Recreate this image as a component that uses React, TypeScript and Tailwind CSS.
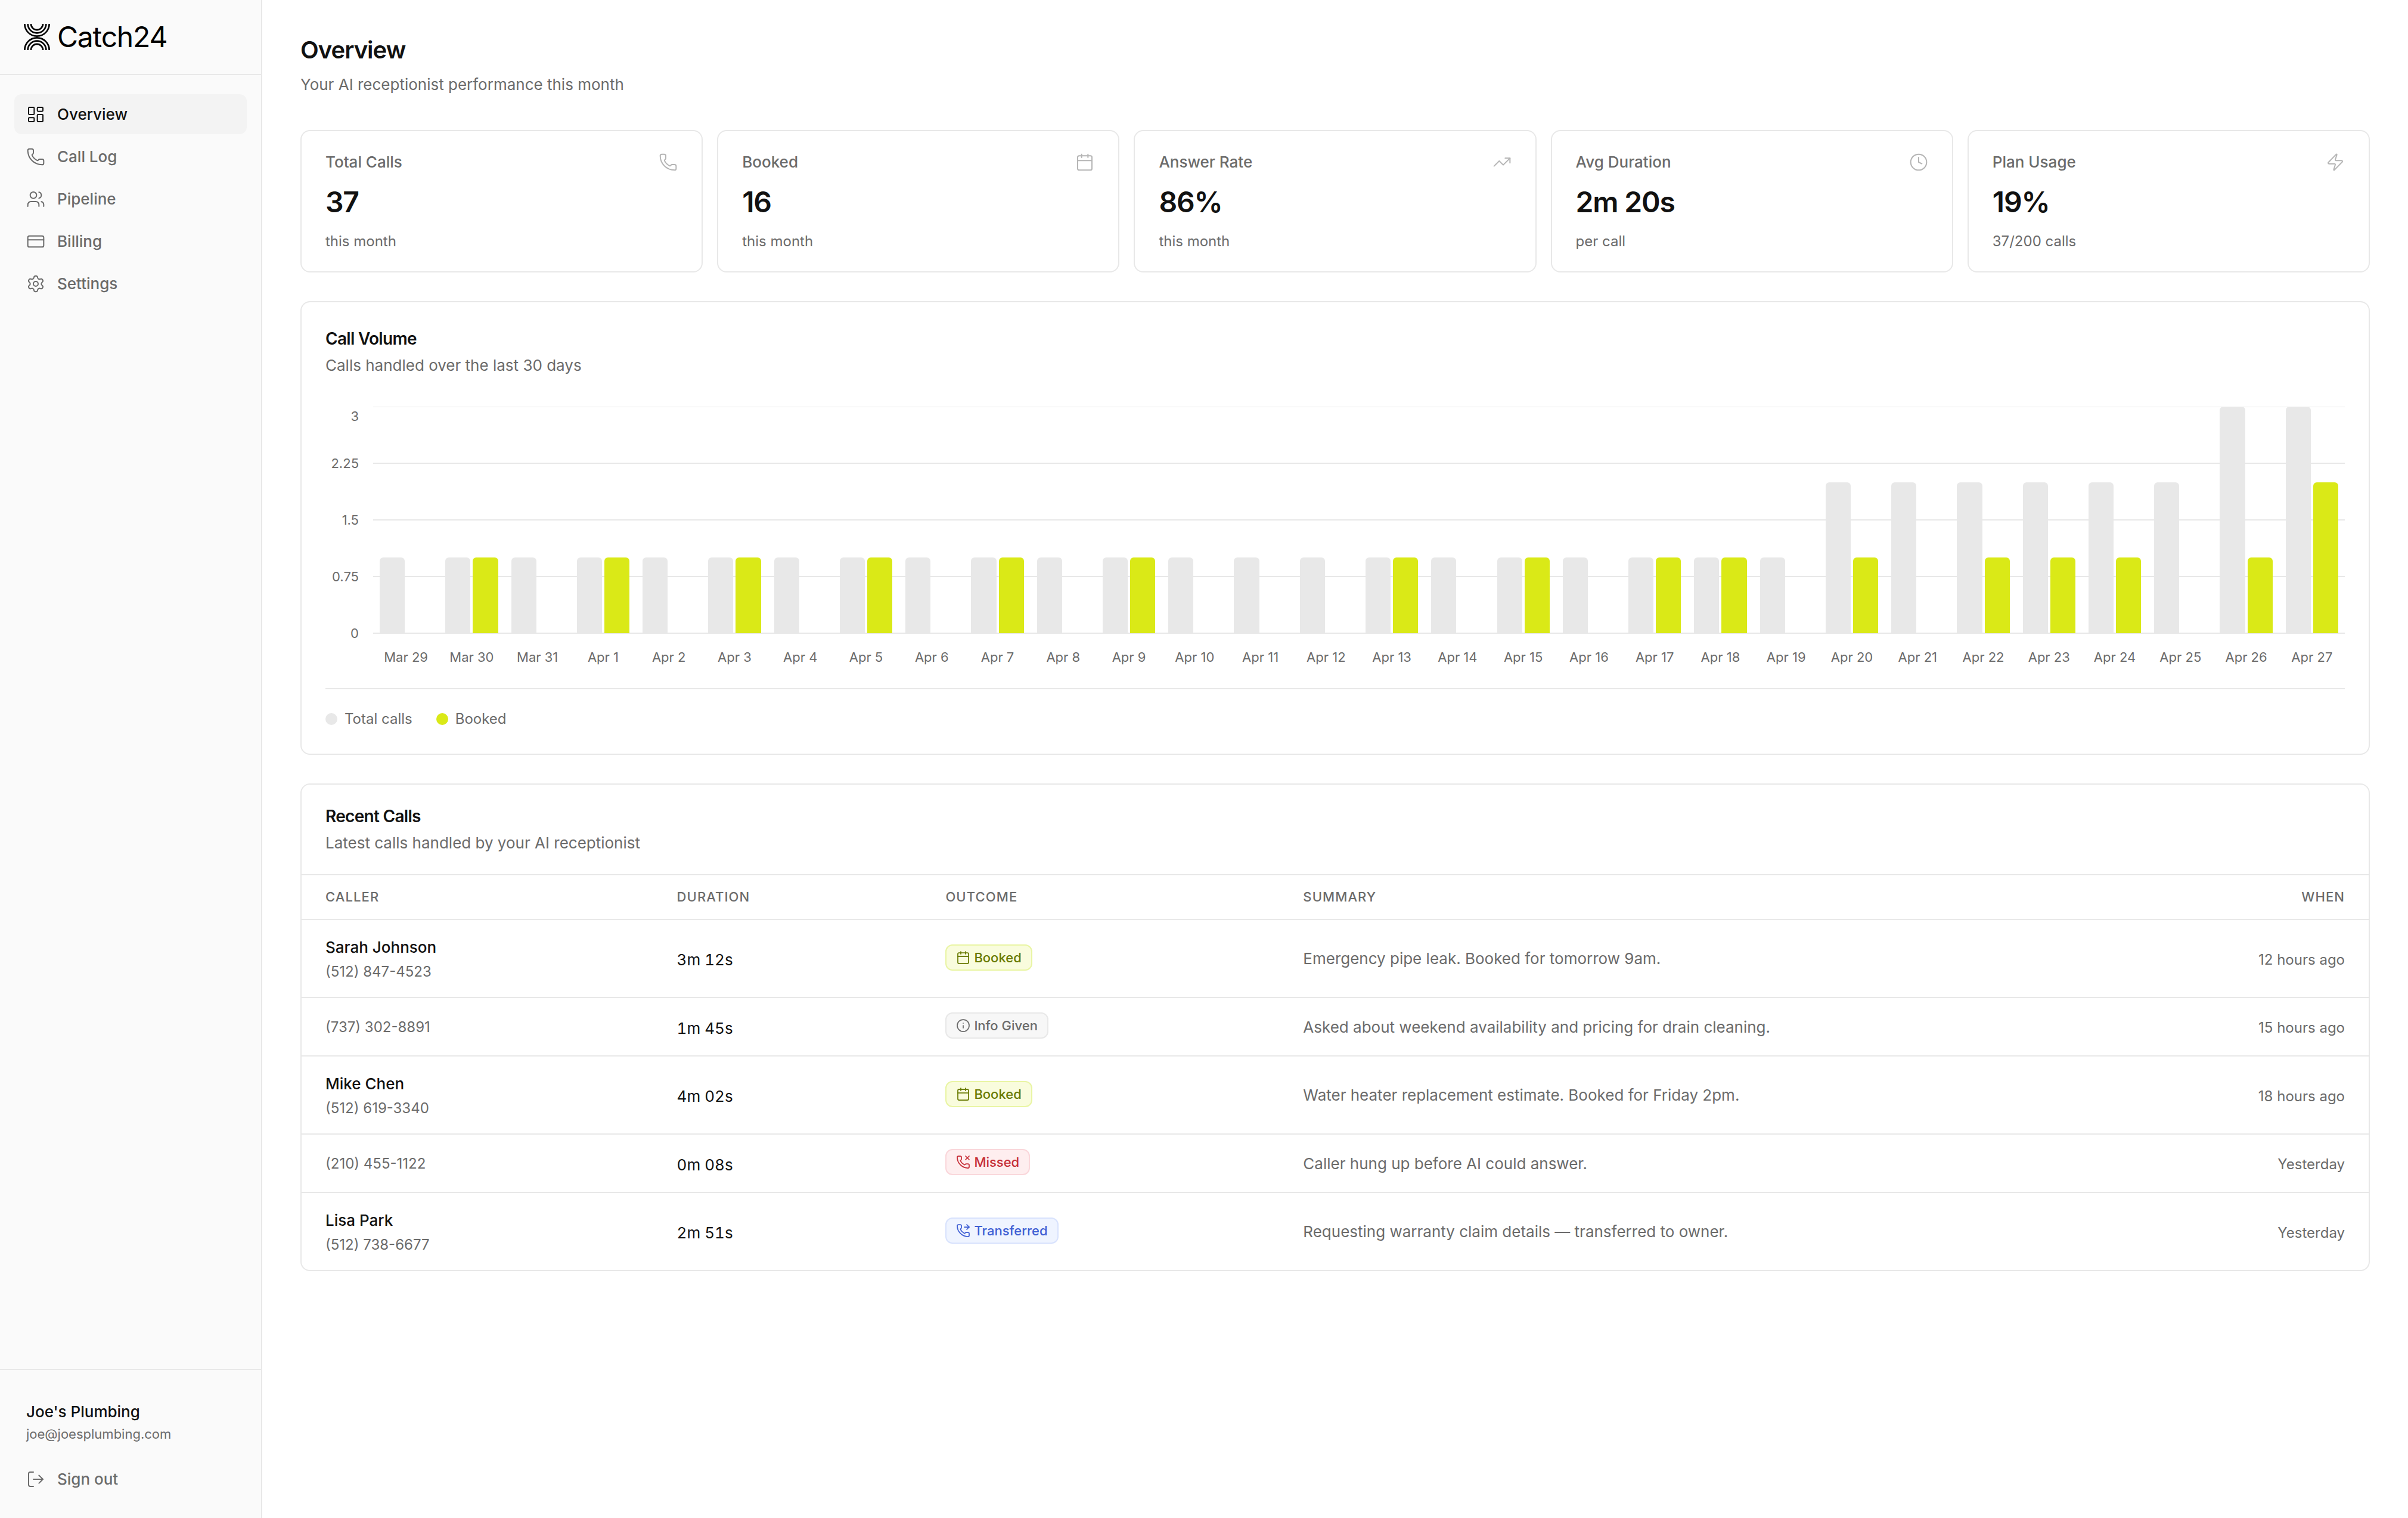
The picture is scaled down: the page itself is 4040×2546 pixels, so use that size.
import React from "react";
import {
  LayoutDashboard,
  Phone,
  Users,
  CreditCard,
  Settings,
  LogOut,
  Calendar,
  TrendingUp,
  Clock,
  Zap,
  Info,
  PhoneMissed,
  PhoneForwarded,
  type LucideIcon,
} from "lucide-react";

const navItems: { label: string; icon: LucideIcon; active?: boolean }[] = [
  { label: "Overview", icon: LayoutDashboard, active: true },
  { label: "Call Log", icon: Phone },
  { label: "Pipeline", icon: Users },
  { label: "Billing", icon: CreditCard },
  { label: "Settings", icon: Settings },
];

const stats: { label: string; value: string; note: string; icon: LucideIcon }[] = [
  { label: "Total Calls", value: "37", note: "this month", icon: Phone },
  { label: "Booked", value: "16", note: "this month", icon: Calendar },
  { label: "Answer Rate", value: "86%", note: "this month", icon: TrendingUp },
  { label: "Avg Duration", value: "2m 20s", note: "per call", icon: Clock },
  { label: "Plan Usage", value: "19%", note: "37/200 calls", icon: Zap },
];

const MAX_CALLS = 3;
const ticks = ["3", "2.25", "1.5", "0.75", "0"];

// [day, total calls, booked calls]
const volume: [string, number, number][] = [
  ["Mar 29", 1, 0],
  ["Mar 30", 1, 1],
  ["Mar 31", 1, 0],
  ["Apr 1", 1, 1],
  ["Apr 2", 1, 0],
  ["Apr 3", 1, 1],
  ["Apr 4", 1, 0],
  ["Apr 5", 1, 1],
  ["Apr 6", 1, 0],
  ["Apr 7", 1, 1],
  ["Apr 8", 1, 0],
  ["Apr 9", 1, 1],
  ["Apr 10", 1, 0],
  ["Apr 11", 1, 0],
  ["Apr 12", 1, 0],
  ["Apr 13", 1, 1],
  ["Apr 14", 1, 0],
  ["Apr 15", 1, 1],
  ["Apr 16", 1, 0],
  ["Apr 17", 1, 1],
  ["Apr 18", 1, 1],
  ["Apr 19", 1, 0],
  ["Apr 20", 2, 1],
  ["Apr 21", 2, 0],
  ["Apr 22", 2, 1],
  ["Apr 23", 2, 1],
  ["Apr 24", 2, 1],
  ["Apr 25", 2, 0],
  ["Apr 26", 3, 1],
  ["Apr 27", 3, 2],
];

type Outcome = "Booked" | "Info Given" | "Missed" | "Transferred";

const outcomes: Record<Outcome, { icon: LucideIcon; tone: string }> = {
  Booked: { icon: Calendar, tone: "border-[#e9f5a4] bg-[#f9fcdd] text-[#687a00]" },
  "Info Given": { icon: Info, tone: "border-[#e8e8e8] bg-[#f7f7f7] text-[#6b6b6b]" },
  Missed: { icon: PhoneMissed, tone: "border-[#fad7db] bg-[#feeeef] text-[#c62f38]" },
  Transferred: { icon: PhoneForwarded, tone: "border-[#d8e2fd] bg-[#eff4ff] text-[#3f5fd4]" },
};

const calls: {
  name?: string;
  phone: string;
  duration: string;
  outcome: Outcome;
  summary: string;
  when: string;
}[] = [
  {
    name: "Sarah Johnson",
    phone: "(512) 847-4523",
    duration: "3m 12s",
    outcome: "Booked",
    summary: "Emergency pipe leak. Booked for tomorrow 9am.",
    when: "12 hours ago",
  },
  {
    phone: "(737) 302-8891",
    duration: "1m 45s",
    outcome: "Info Given",
    summary: "Asked about weekend availability and pricing for drain cleaning.",
    when: "15 hours ago",
  },
  {
    name: "Mike Chen",
    phone: "(512) 619-3340",
    duration: "4m 02s",
    outcome: "Booked",
    summary: "Water heater replacement estimate. Booked for Friday 2pm.",
    when: "18 hours ago",
  },
  {
    phone: "(210) 455-1122",
    duration: "0m 08s",
    outcome: "Missed",
    summary: "Caller hung up before AI could answer.",
    when: "Yesterday",
  },
  {
    name: "Lisa Park",
    phone: "(512) 738-6677",
    duration: "2m 51s",
    outcome: "Transferred",
    summary: "Requesting warranty claim details — transferred to owner.",
    when: "Yesterday",
  },
];

function LogoMark() {
  return (
    <svg
      viewBox="0 0 44 44"
      className="size-11"
      fill="none"
      stroke="currentColor"
      strokeWidth="2.7"
      aria-hidden="true"
    >
      <path d="M1.35 0a20.65 20.65 0 0 0 41.3 0" />
      <path d="M6.65 0a15.35 15.35 0 0 0 30.7 0" />
      <path d="M11.95 0a10.05 10.05 0 0 0 20.1 0" />
      <path d="M1.35 44a20.65 20.65 0 0 1 41.3 0" />
      <path d="M6.65 44a15.35 15.35 0 0 1 30.7 0" />
      <path d="M11.95 44a10.05 10.05 0 0 1 20.1 0" />
    </svg>
  );
}

function Sidebar() {
  return (
    <aside className="flex w-[440px] shrink-0 flex-col border-r-2 border-[#e8e8e8] bg-[#fafafa]">
      <div className="flex h-[126px] items-center gap-3 border-b-2 border-[#e8e8e8] px-10 text-black">
        <LogoMark />
        <span className="text-[48px] leading-[60px] tracking-tight">Catch24</span>
      </div>
      <nav className="flex flex-1 flex-col gap-1 px-6 py-8">
        {navItems.map(({ label, icon: Icon, active }) => (
          <a
            key={label}
            href="#"
            aria-current={active ? "page" : undefined}
            className={
              active
                ? "flex items-center gap-5 rounded-xl bg-[#f3f3f3] px-5 py-[14px] text-[26px] leading-[39px] font-medium text-[#111111]"
                : "flex items-center gap-5 rounded-xl px-5 py-[14px] text-[26px] leading-[39px] font-medium text-[#6b6b6b]"
            }
          >
            <Icon className="size-8" strokeWidth={1.5} />
            {label}
          </a>
        ))}
      </nav>
      <div className="border-t-2 border-[#e8e8e8] px-6 pt-[50px] pb-8">
        <div className="px-5 pb-6">
          <p className="text-[26px] leading-[39px] font-medium text-[#111111]">Joe's Plumbing</p>
          <p className="text-[22px] leading-9 text-[#6b6b6b]">joe@joesplumbing.com</p>
        </div>
        <button
          type="button"
          className="flex w-full items-center gap-5 rounded-xl px-5 py-[14px] text-[26px] leading-[39px] font-medium text-[#6b6b6b]"
        >
          <LogOut className="size-8" strokeWidth={1.5} />
          Sign out
        </button>
      </div>
    </aside>
  );
}

function StatCards() {
  return (
    <section className="grid grid-cols-5 gap-6" aria-label="Key figures">
      {stats.map(({ label, value, note, icon: Icon }) => (
        <div key={label} className="rounded-2xl border-2 border-[#e8e8e8] bg-white px-10 py-8">
          <div className="flex items-center justify-between">
            <h2 className="text-[26px] leading-[39px] font-medium text-[#6b6b6b]">{label}</h2>
            <Icon className="size-8 text-[#b5b5b5]" strokeWidth={1.5} />
          </div>
          <p className="mt-3 text-[48px] leading-[72px] font-semibold tracking-tight">{value}</p>
          <p className="mt-3 text-[24px] leading-9 text-[#6b6b6b]">{note}</p>
        </div>
      ))}
    </section>
  );
}

function CallVolume() {
  return (
    <section className="rounded-2xl border-2 border-[#e8e8e8] bg-white p-10">
      <h2 className="text-[28px] leading-[42px] font-semibold tracking-tight">Call Volume</h2>
      <p className="mt-1 text-[26px] leading-[39px] text-[#6b6b6b]">Calls handled over the last 30 days</p>

      <div className="mt-[50px] flex gap-6 text-[22px] leading-8 text-[#6b6b6b]">
        <div className="flex w-14 flex-col gap-[63px] text-right">
          {ticks.map((tick, i) => (
            <span key={tick} className={i === 0 ? "-mb-4" : ""}>
              {tick}
            </span>
          ))}
        </div>
        <div className="min-w-0 flex-1">
          <div className="relative h-[380px]">
            <div className="absolute inset-x-0 -inset-y-px flex flex-col justify-between">
              {ticks.map((tick, i) => (
                <div key={tick} className={i === 0 ? "mt-px h-px bg-[#e8e8e8]" : "h-0.5 bg-[#e8e8e8]"} />
              ))}
            </div>
            <div className="relative grid h-full grid-cols-[repeat(30,minmax(0,1fr))]">
              {volume.map(([day, total, booked]) => (
                <div key={day} className="grid grid-cols-2 items-end gap-1 px-[11px]">
                  <div
                    className="rounded-t-md bg-[#e8e8e8]"
                    style={{ height: `${(total / MAX_CALLS) * 100}%` }}
                  />
                  <div
                    className="rounded-t-md bg-[#dae917]"
                    style={{ height: `${(booked / MAX_CALLS) * 100}%` }}
                  />
                </div>
              ))}
            </div>
          </div>
          <div className="mt-6 grid grid-cols-[repeat(30,minmax(0,1fr))] text-center">
            {volume.map(([day]) => (
              <span key={day} className="whitespace-nowrap">
                {day}
              </span>
            ))}
          </div>
        </div>
      </div>

      <div className="mt-9 flex gap-10 border-t-2 border-[#e8e8e8] pt-8 text-[24px] leading-9 text-[#6b6b6b]">
        <span className="flex items-center gap-3">
          <span className="size-5 rounded-full bg-[#e8e8e8]" />
          Total calls
        </span>
        <span className="flex items-center gap-3">
          <span className="size-5 rounded-full bg-[#dae917]" />
          Booked
        </span>
      </div>
    </section>
  );
}

function OutcomeBadge({ outcome }: { outcome: Outcome }) {
  const { icon: Icon, tone } = outcomes[outcome];
  return (
    <span
      className={`inline-flex h-11 items-center gap-1.5 rounded-xl border-2 px-4 align-top text-[22px] leading-8 font-medium ${tone}`}
    >
      <Icon className="size-6" strokeWidth={1.75} />
      {outcome}
    </span>
  );
}

function RecentCalls() {
  return (
    <section className="overflow-hidden rounded-2xl border-2 border-[#e8e8e8] bg-white">
      <div className="px-10 pt-8 pb-[33px]">
        <h2 className="text-[28px] leading-[42px] font-semibold tracking-tight">Recent Calls</h2>
        <p className="mt-1 text-[26px] leading-[39px] text-[#6b6b6b]">
          Latest calls handled by your AI receptionist
        </p>
      </div>
      <table className="w-full text-left">
        <thead>
          <tr className="border-y-2 border-[#e8e8e8] text-[22px] leading-[33px] tracking-wider text-[#6b6b6b] uppercase">
            <th className="w-[17%] px-10 py-5 font-medium">Caller</th>
            <th className="w-[13%] px-10 py-5 font-medium">Duration</th>
            <th className="w-[17.3%] px-10 py-5 font-medium">Outcome</th>
            <th className="px-10 py-5 font-medium">Summary</th>
            <th className="px-10 py-5 text-right font-medium">When</th>
          </tr>
        </thead>
        <tbody className="divide-y-2 divide-[#e8e8e8] text-[26px] leading-[39px]">
          {calls.map((call) => (
            <tr key={call.phone}>
              <td className="px-10 pt-[26px] pb-6">
                {call.name && <p className="mb-1 font-medium">{call.name}</p>}
                <p className="text-[24px] leading-9 text-[#6b6b6b]">{call.phone}</p>
              </td>
              <td className="px-10 pt-7 pb-6 tabular-nums">{call.duration}</td>
              <td className="px-10 pt-6 pb-7">
                <OutcomeBadge outcome={call.outcome} />
              </td>
              <td className="px-10 py-[26px] text-[#6b6b6b]">{call.summary}</td>
              <td className="px-10 pt-7 pb-6 text-right text-[24px] leading-9 text-[#6b6b6b]">{call.when}</td>
            </tr>
          ))}
        </tbody>
      </table>
    </section>
  );
}

export default function App() {
  return (
    <div className="flex min-h-screen bg-white font-['Inter',sans-serif] text-[#111111] antialiased">
      <Sidebar />
      <main className="flex min-w-0 flex-1 flex-col gap-12 px-16 py-[54px]">
        <header className="pb-2">
          <h1 className="text-[40px] leading-[60px] font-semibold tracking-tight">Overview</h1>
          <p className="mt-2 text-[26px] leading-10 text-[#6b6b6b]">
            Your AI receptionist performance this month
          </p>
        </header>
        <StatCards />
        <CallVolume />
        <RecentCalls />
      </main>
    </div>
  );
}
